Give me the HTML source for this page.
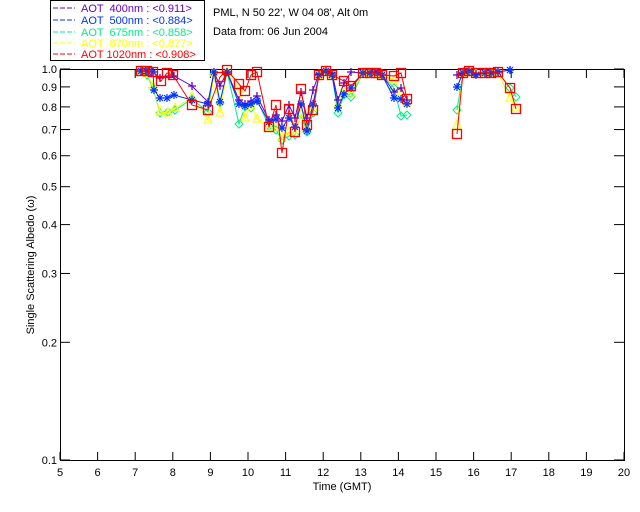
<!DOCTYPE html>
<html><head><meta charset="utf-8"><style>
body{margin:0;background:#fff;width:640px;height:512px;overflow:hidden}
svg{display:block}
text{font-family:"Liberation Sans",sans-serif;font-size:11px}
</style></head><body>
<svg id="s" width="640" height="512" xmlns="http://www.w3.org/2000/svg">
<rect x="0" y="0" width="640" height="512" fill="#fff"/>
<rect x="50.5" y="0.5" width="154" height="60" fill="none" stroke="#000"/>
<g font-size="11">
<line x1="53" y1="8" x2="75" y2="8" stroke="#6600cc" stroke-dasharray="5,2"/><text x="81" y="12" fill="#6600cc" xml:space="preserve">AOT  400nm : &lt;0.911&gt;</text>
<line x1="53" y1="20" x2="75" y2="20" stroke="#0033ff" stroke-dasharray="5,2"/><text x="81" y="24" fill="#0033ff" xml:space="preserve">AOT  500nm : &lt;0.884&gt;</text>
<line x1="53" y1="32" x2="75" y2="32" stroke="#00ee88" stroke-dasharray="5,2"/><text x="81" y="36" fill="#00ee88" xml:space="preserve">AOT  675nm : &lt;0.858&gt;</text>
<line x1="53" y1="43" x2="75" y2="43" stroke="#ffff00" stroke-dasharray="5,2"/><text x="81" y="47" fill="#ffff00" xml:space="preserve">AOT  870nm : &lt;0.877&gt;</text>
<line x1="53" y1="54" x2="75" y2="54" stroke="#ff0000" stroke-dasharray="5,2"/><text x="81" y="58" fill="#ff0000" xml:space="preserve">AOT 1020nm : &lt;0.908&gt;</text>
</g>
<text x="213" y="16">PML, N 50 22', W 04 08', Alt 0m</text>
<text x="213" y="35">Data from: 06 Jun 2004</text>
<rect x="60.5" y="69.5" width="564" height="391" fill="none" stroke="#000"/>
<g id="ax" stroke="#000"></g>
<g id="lb" font-size="10" text-anchor="end"></g>
<g id="xl" font-size="10" text-anchor="middle"></g>
<text x="342" y="490" font-size="10" text-anchor="middle">Time (GMT)</text>
<text transform="translate(34,265) rotate(-90)" font-size="10" text-anchor="middle">Single Scattering Albedo (ω)</text>
<g id="d"></g>
</svg>
<script>
var NS="http://www.w3.org/2000/svg";
function el(p,t,a,tx){var e=document.createElementNS(NS,t);for(var k in a)e.setAttribute(k,a[k]);if(tx)e.textContent=tx;document.getElementById(p).appendChild(e);}
function Y(v){return 460-(Math.log10(v)+1)*391;}
var ys=[0.1,0.2,0.3,0.4,0.5,0.6,0.7,0.8,0.9,1.0];
ys.forEach(function(v){var y=Y(v);el("ax","line",{x1:60,y1:y,x2:70,y2:y});el("ax","line",{x1:614,y1:y,x2:624,y2:y});el("lb","text",{x:57,y:y+4},v.toFixed(1));});
for(var h=5;h<=20;h++){var x=60+(h-5)*37.6;el("ax","line",{x1:x,y1:460,x2:x,y2:452});el("ax","line",{x1:x,y1:70,x2:x,y2:78});el("xl","text",{x:x,y:476},""+h);}
function P(s){return s.split(" ").map(function(q){return q.split(",").map(Number);});}
var S=[
["#00ee88","d",P("141,71 147,75 153,88 160,113 168,112 175,110 192,99 208,112 214,74 220,103 227,72 239,124 245,107 251,108 257,100 269,126 276,130 282,140 289,136 295,135 301,114 307,132 313,113 319,75 326,71 332,75 338,113 344,95 351,97 363,73 370,73 376,73 382,75 394,88 401,116 407,115 457,110 463,73 469,72 476,73 485,73 491,73 498,73 510,88 516,97")],
["#ffff00","t",P("141,71 147,74 153,86 160,112 168,113 175,108 192,97 208,120 214,73 220,113 227,72 239,89 245,118 251,105 257,119 269,127 276,128 282,137 289,132 295,134 301,114 307,128 313,108 319,75 326,71 332,75 338,104 344,88 351,93 363,73 370,73 376,73 382,75 394,80 401,92 407,103 457,125 463,73 469,72 476,73 485,73 491,73 498,73 510,98 516,108")],
["#6600cc","p",P("141,71 147,71 153,72 160,78 169,76 174,76 192,86 208,102 214,72 220,86 227,72 239,100 245,104 251,101 257,96 269,120 276,115 282,121 289,105 295,118 301,92 307,118 313,90 319,74 326,72 332,73 338,100 344,83 351,72 363,73 370,73 376,72 382,75 394,92 401,88 407,100 457,75 463,73 469,71 476,74 485,73 491,73 498,72 510,70")],
["#0033ff","a",P("141,71 147,71 153,72 154,90 160,98 167,98 174,95 192,100 208,104 214,72 220,102 227,72 239,104 245,106 251,104 257,101 269,122 276,119 282,128 289,118 295,127 301,104 307,131 313,104 319,75 326,71 332,75 338,108 344,94 351,88 363,73 370,73 376,72 382,75 394,98 401,99 407,104 457,87 463,73 469,71 476,75 485,73 491,73 498,72 510,70")],
["#ff0000","s",P("141,71 147,71 153,72 161,81 167,73 173,75 192,105 208,110 220,77 227,70 239,84 245,91 251,75 257,72 269,127 276,105 282,153 289,109 295,132 301,89 307,125 313,110 319,75 326,71 332,75 344,81 351,86 363,73 370,73 376,73 382,75 394,76 401,73 407,99 457,134 463,73 469,71 476,73 485,73 491,73 498,72 510,88 516,109")]
];
S.forEach(function(s){var c=s[0],m=s[1],p=s[2];
 var segs=[[]];p.forEach(function(q,i){if(i>0&&q[0]-p[i-1][0]>20)segs.push([]);segs[segs.length-1].push(q);});
 segs.forEach(function(g){el("d","polyline",{points:g.map(function(q){return q.join(",");}).join(" "),fill:"none",stroke:c,"stroke-width":1});});
 p.forEach(function(q){var x=q[0],y=q[1];
  if(m=="s")el("d","rect",{x:x-4.5,y:y-4.5,width:9,height:9,fill:"none",stroke:c,"stroke-width":1.3});
  else if(m=="d")el("d","path",{d:"M"+x+","+(y-4)+"L"+(x+4)+","+y+"L"+x+","+(y+4)+"L"+(x-4)+","+y+"Z",fill:"none",stroke:c});
  else if(m=="t")el("d","path",{d:"M"+x+","+(y-5)+"L"+(x+4)+","+(y+3)+"L"+(x-4)+","+(y+3)+"Z",fill:"none",stroke:c});
  else if(m=="p")el("d","path",{d:"M"+(x-4)+","+y+"H"+(x+4)+"M"+x+","+(y-4)+"V"+(y+4),stroke:c,"stroke-width":1.3});
  else el("d","path",{d:"M"+(x-4)+","+y+"H"+(x+4)+"M"+x+","+(y-4)+"V"+(y+4)+"M"+(x-3)+","+(y-3)+"L"+(x+3)+","+(y+3)+"M"+(x-3)+","+(y+3)+"L"+(x+3)+","+(y-3),stroke:c,"stroke-width":1.2});
 });
});
</script>
</body></html>
